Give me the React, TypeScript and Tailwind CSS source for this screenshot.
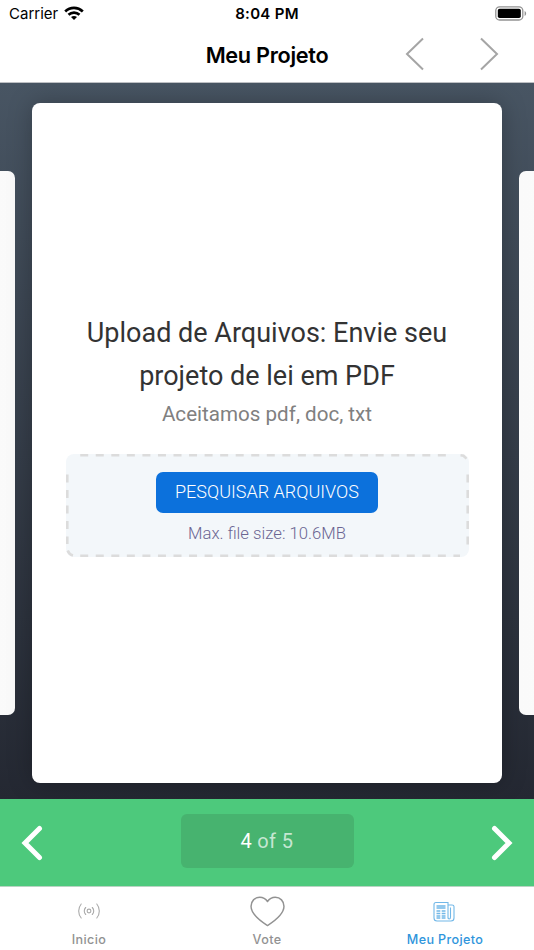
import type { ReactNode } from "react";

interface TabProps {
  label: string;
  active?: boolean;
  children: ReactNode;
}

function Tab({ label, active, children }: TabProps) {
  return (
    <button className={`flex flex-1 flex-col items-center ${active ? "text-[#2f95dc]" : "text-[#929292]"}`}>
      <span className="flex h-[44px] items-center pt-[6px]">{children}</span>
      <span className="font-['Inter'] text-[12.6px] leading-5 font-medium tracking-[0.35px]">{label}</span>
    </button>
  );
}

function StatusBar() {
  return (
    <div className="flex h-7 items-center justify-between pr-[7px] pl-[9px] text-black">
      <div className="flex w-40 items-center gap-[6px]">
        <span className="text-[15px]">Carrier</span>
        <svg className="mb-[2px]" width="20" height="15" viewBox="0 0 20 15" fill="none" stroke="currentColor" strokeWidth="2.7">
          <path d="M1.2 5.4C6.2.7 13.8.7 18.8 5.4" />
          <path d="M4.5 8.7c3.1-2.9 7.9-2.9 11 0" />
          <path d="M7 11.1c1.7-1.6 4.3-1.6 6 0l-3 3z" fill="currentColor" stroke="none" />
        </svg>
      </div>
      <span className="pr-[2px] text-[15px] font-semibold tracking-[0.3px]">8:04 PM</span>
      <div className="mb-[2px] flex w-40 justify-end">
        <svg width="32" height="15" viewBox="0 0 32 15" fill="none">
          <rect x="0.8" y="0.8" width="27" height="13.2" rx="3.8" stroke="#929292" strokeWidth="1.3" />
          <rect x="2.8" y="2.8" width="23" height="9.2" rx="1.8" fill="#000" />
          <path d="M29.6 5v5c2-.8 2-4.2 0-5z" fill="#929292" />
        </svg>
      </div>
    </div>
  );
}

function NavBar() {
  return (
    <div className="grid h-[52px] grid-cols-[1fr_auto_1fr] items-center">
      <h1 className="col-start-2 pt-px text-[21.7px] leading-7 font-semibold tracking-[-0.3px] text-black">Meu Projeto</h1>
      <div className="flex justify-end gap-[56px] pr-[35px] text-[#a5a5a5]">
        <svg width="19" height="34" viewBox="0 0 19 34" fill="none" stroke="currentColor" strokeWidth="2">
          <path d="M18 1.5 2 17l16 15.5" />
        </svg>
        <svg width="19" height="34" viewBox="0 0 19 34" fill="none" stroke="currentColor" strokeWidth="2">
          <path d="m1 1.5 16 15.5L1 32.5" />
        </svg>
      </div>
    </div>
  );
}

function Dropzone() {
  return (
    <div className="relative mt-6 flex h-[103px] w-[403px] flex-col items-center rounded-[8px] bg-[#f3f7fa] pt-[18px]">
      <svg
        className="absolute inset-0"
        width="403"
        height="103"
        viewBox="0 0 403 103"
        fill="none"
        stroke="#dcdcdc"
        strokeWidth="2.6"
      >
        <path d="M14.2 1.3H386M14.2 101.7H394" strokeDasharray="8 7.55" />
        <path d="M1.3 20.4V90M401.7 20.4V98" strokeDasharray="8 7.5" />
        <path d="M394.5 1.3 397.5 1.7 400.5 4.6M1.7 96.5Q3 100.5 7 101.5" />
      </svg>
      <button className="h-[41px] w-[222px] rounded-[7px] bg-[#0c71dc] pb-0.5 text-[18px] font-light text-white">
        PESQUISAR ARQUIVOS
      </button>
      <p className="mt-[9px] text-[16.7px] leading-6 font-light text-[#6b6592]">Max. file size: 10.6MB</p>
    </div>
  );
}

function Carousel() {
  return (
    <main className="flex h-[716px] items-center justify-center gap-[17px] overflow-hidden bg-linear-to-b from-[#485563] to-[#242832] pt-[4px]">
      <div className="h-[544px] w-[375px] shrink-0 rounded-[7px] bg-linear-to-r from-white to-[#fafafa]" />
      <section className="flex h-[680px] w-[470px] shrink-0 flex-col items-center rounded-[8px] bg-white pt-[209px] font-['Roboto'] shadow-[0_0_24px_rgba(0,0,0,0.25)]">
        <h2 className="text-center text-[27px] leading-[43px] text-[#333]">
          Upload de Arquivos: Envie seu
          <br />
          projeto de lei em PDF
        </h2>
        <p className="text-[20.6px] leading-8 text-[#808080]">Aceitamos pdf, doc, txt</p>
        <Dropzone />
      </section>
      <div className="h-[544px] w-[375px] shrink-0 rounded-[7px] bg-linear-to-l from-white to-[#fafafa]" />
    </main>
  );
}

function Pager() {
  return (
    <div className="flex h-[87px] items-center justify-between bg-[#4dc97c] px-[21px] text-white">
      <svg width="22" height="36" viewBox="0 0 22 36" fill="none" stroke="currentColor" strokeWidth="5" strokeLinecap="round">
        <path d="M18.5 3.5 4 18l14.5 14.5" />
      </svg>
      <div className="mb-[3px] flex h-[54px] w-[173px] items-center justify-center rounded-[6px] bg-[#47b36f] font-['Roboto'] text-[20px] tracking-[0.4px]">
        <span>4</span>
        <span className="ml-[5px] text-white/70">of 5</span>
      </div>
      <svg width="22" height="36" viewBox="0 0 22 36" fill="none" stroke="currentColor" strokeWidth="5" strokeLinecap="round">
        <path d="M3.5 3.5 18 18 3.5 32.5" />
      </svg>
    </div>
  );
}

function TabBar() {
  return (
    <nav className="flex h-[64px] border-t border-[#b9d3c3] bg-white">
      <Tab label="Inicio">
        <svg className="mb-px" width="22" height="16" viewBox="0 0 22 16" fill="none" stroke="#aaa" strokeWidth="1.1" strokeLinecap="round">
          <circle cx="11" cy="8" r="1.9" />
          <path d="M7.7 4.5a5 5 0 0 0 0 7M14.3 4.5a5 5 0 0 1 0 7M3.2 1a11 11 0 0 0 0 14M18.8 1a11 11 0 0 1 0 14" />
        </svg>
      </Tab>
      <Tab label="Vote">
        <svg width="35" height="31" viewBox="0 0 36 32" fill="none" stroke="currentColor" strokeWidth="1.5" strokeLinejoin="round">
          <path d="M18 5.7C16.2 3 13.4 1.3 10 1.3 4.8 1.3 1 5.4 1 10.6 1 18 7.8 24 18 30.5 28.2 24 35 18 35 10.6 35 5.4 31.2 1.3 26 1.3c-3.4 0-6.2 1.7-8 4.4z" />
        </svg>
      </Tab>
      <Tab label="Meu Projeto" active>
        <svg className="mr-[2px] mb-px" width="22" height="21" viewBox="0 0 22 21" fill="none" stroke="#72b8e8" strokeWidth="1.1">
          <path d="M15 17.5V1.5H3Q1 1.5 1 3.5V17Q1 20 4 20H18Q21 20 21 17V5.5Q21 4 19 4H15M15 16Q15 18 16.2 18 17.5 18 17.5 16V6.5" />
          <path d="M3.5 5h9M3.5 7h9M3.5 10h3.800M8.700 10h3.800M3.500 12.500h3.800M8.700 12.500h3.800M3.500 15h3.800M8.700 15h3.800M3.500 17h3.800M8.700 17h3.800" strokeWidth="1.3" />
        </svg>
      </Tab>
    </nav>
  );
}

export default function App() {
  return (
    <div className="flex h-[950px] w-[534px] flex-col overflow-hidden bg-white font-['Inter']">
      <header className="h-[83px] border-b border-[#bec0c4]">
        <StatusBar />
        <NavBar />
      </header>
      <Carousel />
      <Pager />
      <TabBar />
    </div>
  );
}
